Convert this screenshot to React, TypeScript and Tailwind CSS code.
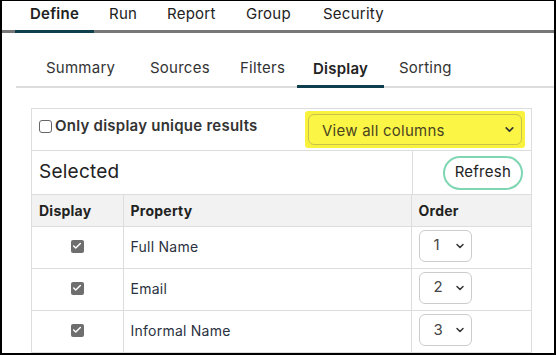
import { ChevronDown, Check } from "lucide-react";

const topTabs = [
  { label: "Define", w: "w-[79px]" },
  { label: "Run", w: "ml-[15px] w-[58px]" },
  { label: "Report", w: "w-[79px]" },
  { label: "Group", w: "w-[77px]" },
  { label: "Security", w: "" },
];

const subTabs = [
  { label: "Summary", w: "w-[104px]" },
  { label: "Sources", w: "w-[90px]" },
  { label: "Filters", w: "w-[57px]" },
  { label: "Display", w: "w-[87px]" },
  { label: "Sorting", w: "ml-[15px]" },
];

const rows = [
  { name: "Full Name", order: "1" },
  { name: "Email", order: "2" },
  { name: "Informal Name", order: "3" },
];

function CheckedBox() {
  return (
    <span className="inline-flex h-[13px] w-[13px] items-center justify-center rounded-[2px] bg-[#6e6e6e]">
      <Check size={10} strokeWidth={3.5} className="text-white" />
    </span>
  );
}

export default function App() {
  return (
    <div
      className="h-[355px] w-[556px] overflow-hidden border-x-2 border-b-2 border-t border-black bg-white text-[#222] tracking-[0.015em]"
      style={{ fontFamily: "Inter, 'Open Sans', sans-serif" }}
    >
      {/* top nav */}
      <div className="flex h-[32px] items-end border-b-[3px] border-[#777] pl-[13px]">
        {topTabs.map((t, i) =>
          i === 0 ? (
            <div
              key={t.label}
              className="-mb-[3px] w-[79px] border-b-[3px] border-[#0f3e4e] pb-[5px] text-center text-[15px] font-semibold"
            >
              {t.label}
            </div>
          ) : (
            <div key={t.label} className={`${t.w} pb-[5px] text-[15px]`}>
              {t.label}
            </div>
          )
        )}
      </div>

      {/* sub tabs */}
      <div className="ml-[14px] mt-[19px] flex h-[36px] items-end border-b-2 border-[#ddd] pl-[30px]">
        {subTabs.map((t) =>
          t.label === "Display" ? (
            <div
              key={t.label}
              className="-mb-[2px] w-[87px] border-b-[3px] border-[#0f3e4e] pb-[5px] text-center text-[15px] font-semibold"
            >
              {t.label}
            </div>
          ) : (
            <div key={t.label} className={`${t.w} pb-[7px] text-[15px] text-[#333]`}>
              {t.label}
            </div>
          )
        )}
      </div>

      {/* panel */}
      <div className="ml-[29px] mt-[20px] w-[501px] border border-[#ddd]">
        <div className="flex h-[42px] items-start justify-between border-b border-[#ddd] pl-[7px] pr-[6px]">
          <label className="mt-[6px] flex items-center gap-[3px] text-[15px] font-semibold text-[#333]">
            <span className="h-[13px] w-[13px] rounded-[3px] border border-[#666] bg-white" />
            Only display unique results
          </label>
          <div className="mt-[2px] rounded-[3px] bg-[#f8f23c] p-[3px]">
            <div className="flex h-[31px] w-[214px] items-center justify-between rounded-[6px] border border-[#c9c24a] bg-[#fbf546] pl-[13px] pr-[5px] text-[15px] text-[#4a4420]">
              <span className="pt-[3px]">View all columns</span>
              <ChevronDown size={13} strokeWidth={3} className="text-[#333]" />
            </div>
          </div>
        </div>

        <div className="flex h-[44px] border-b border-[#ddd]">
          <div className="flex w-[380px] items-center pl-[7px] text-[19px] text-[#222]">
            Selected
          </div>
          <div className="flex flex-1 items-center justify-end border-l border-[#ddd] pr-[8px]">
            <button className="h-[34px] rounded-full border-2 border-[#7fd6b3] px-[10px] text-[15px] text-[#222]">
              Refresh
            </button>
          </div>
        </div>

        <table className="w-full border-collapse text-[14px]">
          <thead>
            <tr className="h-[31px] bg-[#f2f2f2] text-left">
              <th className="w-[91px] pl-[7px] font-bold">Display</th>
              <th className="border-l border-[#ddd] pl-[7px] font-bold">Property</th>
              <th className="w-[120px] border-l border-[#ddd] pl-[7px] font-bold">Order</th>
            </tr>
          </thead>
          <tbody>
            {rows.map((r) => (
              <tr key={r.name} className="h-[42px] border-t border-[#ddd]">
                <td className="pb-[3px] text-center">
                  <span className="inline-flex">
                    <CheckedBox />
                  </span>
                </td>
                <td className="border-l border-[#ddd] pb-[2px] pl-[7px] text-[#2a3140]">{r.name}</td>
                <td className="border-l border-[#ddd] pb-[3px] pl-[7px]">
                  <div className="flex h-[32px] w-[53px] items-center justify-between rounded-[6px] border border-[#ccc] pl-[14px] pr-[5px] text-[15px] text-[#444]">
                    {r.order}
                    <ChevronDown size={12} strokeWidth={3} className="text-[#333]" />
                  </div>
                </td>
              </tr>
            ))}
          </tbody>
        </table>
      </div>
    </div>
  );
}
